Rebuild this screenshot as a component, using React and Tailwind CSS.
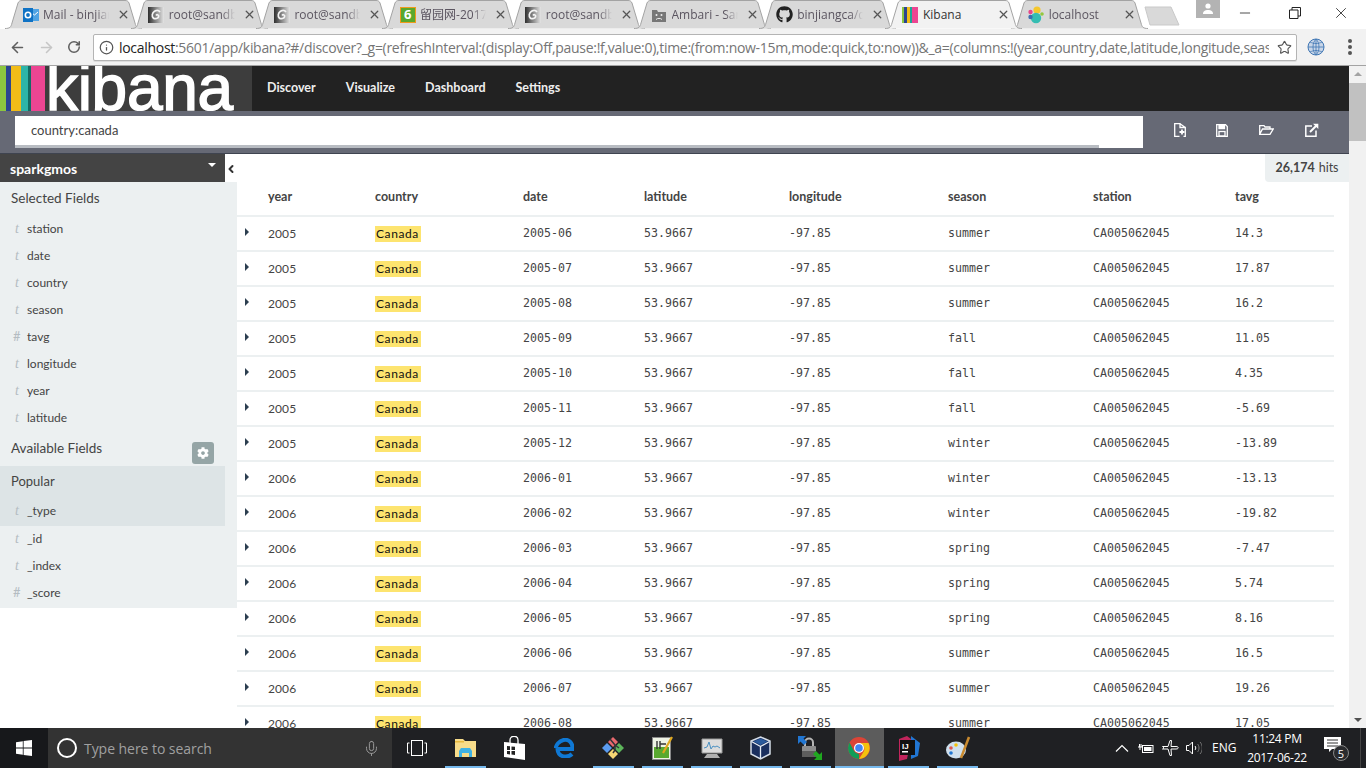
import React from "react";
import { FaGithub, FaCog } from "react-icons/fa";
import { ArrowLeft, ArrowRight, RotateCw, Star, Info, X, Minus, Mic, ChevronLeft } from "lucide-react";

const uiFont = "font-['Open_Sans','Noto_Sans_CJK_SC',sans-serif]";

const Swirl = () => (
  <svg width="16" height="16" viewBox="0 0 16 16">
    <defs>
      <linearGradient id="sw" x1="0" x2="1">
        <stop offset="0" stopColor="#2f2f2f" />
        <stop offset="1" stopColor="#e4e4e4" />
      </linearGradient>
    </defs>
    <rect width="16" height="16" fill="url(#sw)" />
    <path d="M8 8.500c1.200-1.500 3-.5 2.600 1.200S7 12.500 5.300 11 4 5.800 6.500 4.300 11 3.500 12 5" fill="none" stroke="#f4f4f4" strokeWidth="1.700" />
  </svg>
);

const OutlookIcon = () => (
  <svg width="16" height="16" viewBox="0 0 16 16">
    <rect x="6" y="2" width="10" height="12" fill="#4fa3e3" />
    <path d="M9 6l2.5 2L15 5" fill="none" stroke="#fff" />
    <rect y="1" width="10" height="14" fill="#0f72c4" />
    <circle cx="5" cy="8" r="2.7" fill="none" stroke="#fff" strokeWidth="1.6" />
  </svg>
);

const SixIcon = () => (
  <span className="flex h-4 w-4 items-center justify-center border border-[#f09a1a] bg-[#5aa82d] text-[13px] font-bold leading-none text-white">6</span>
);

const AmbariIcon = () => (
  <svg width="16" height="16" viewBox="0 0 16 16">
    <path d="M1 3h5l1 2h8v10H1z" fill="#777" />
    <circle cx="5.5" cy="8" r="1" fill="#eee" />
    <circle cx="10.5" cy="8" r="1" fill="#eee" />
    <path d="M5 12.5c1.5-1.5 4.5-1.5 6 0" stroke="#eee" fill="none" />
  </svg>
);

const KibanaIcon = () => (
  <svg width="16" height="16" viewBox="0 0 16 16">
    <rect width="2" height="16" fill="#8cc63f" />
    <rect x="2" width="3" height="16" fill="#2b4590" />
    <rect x="5" width="3" height="16" fill="#f1bc18" />
    <rect x="8" width="2" height="16" fill="#1ba898" />
    <rect x="10" width="6" height="16" fill="#ec4592" />
  </svg>
);

const ElasticIcon = () => (
  <svg width="16" height="18" viewBox="0 0 16 18">
    <circle cx="9" cy="4" r="3.6" fill="#f5c72c" />
    <circle cx="8" cy="12" r="5.2" fill="#35bdb2" />
    <circle cx="2.5" cy="6" r="2.2" fill="#e8488a" />
    <circle cx="2.5" cy="11" r="2.2" fill="#3d6db0" />
    <circle cx="14" cy="8" r="1.8" fill="#94c83d" />
  </svg>
);

const tabs = [
  { title: "Mail - binjiang", icon: <OutlookIcon /> },
  { title: "root@sandbox", icon: <Swirl /> },
  { title: "root@sandbox", icon: <Swirl /> },
  { title: "留园网-2017", icon: <SixIcon /> },
  { title: "root@sandbox", icon: <Swirl /> },
  { title: "Ambari - Sandbox", icon: <AmbariIcon /> },
  { title: "binjiangca/data", icon: <FaGithub size={17} color="#222" /> },
  { title: "Kibana", icon: <KibanaIcon />, active: true },
  { title: "localhost", icon: <ElasticIcon /> },
];

const Tab = ({ title, icon, active }) => (
  <div className={`relative mr-[-11.3px] flex h-[29px] w-[137px] shrink-0 items-center pl-[17px] pr-[12px] ${active ? "z-10" : ""}`}>
    <svg className="absolute inset-0" width="137" height="29" viewBox="0 0 137 29">
      <path
        d="M0 28.5C5 28.5 6 27 7 23L13 3C14 1 15 .5 17 .5H120C122 .5 123 1 124 3L130 23C131 27 132 28.5 137 28.5"
        fill={active ? "#f2f2f2" : "#d9d9d9"}
        stroke="#a3a3a3"
      />
    </svg>
    <span className="relative flex w-[17px] shrink-0 justify-center">{icon}</span>
    <span className={`relative ml-[4px] w-[66px] overflow-hidden whitespace-nowrap text-[12px] ${active ? "text-[#333]" : "text-[#5b5560] [mask-image:linear-gradient(to_right,black_80%,transparent)]"}`}>
      {title}
    </span>
    <X className="relative ml-auto text-[#555]" size={13} strokeWidth={2.4} />
  </div>
);

const TabStrip = () => (
  <div className={`flex h-[29px] items-start bg-white pl-[5px] ${uiFont}`}>
    {tabs.map((tab, i) => (
      <Tab key={i} {...tab} />
    ))}
    <svg className="ml-[8px] mt-[6px] shrink-0" width="36" height="20" viewBox="0 0 36 20">
      <path d="M1 1H27L35 19H6Z" fill="#d9d9d9" stroke="#c9c9c9" />
    </svg>
    <div className="ml-[16px] flex h-[18px] w-[24px] shrink-0 items-center justify-center bg-[#b3b3b3]">
      <svg width="12" height="12" viewBox="0 0 12 12">
        <circle cx="6" cy="3" r="2.6" fill="#fff" />
        <path d="M1 11c0-3 2-4 5-4s5 1 5 4z" fill="#fff" />
      </svg>
    </div>
    <div className="flex flex-1 items-center pt-[4px] text-[#222]">
      <Minus className="ml-[17px]" size={16} strokeWidth={1.2} />
      <svg className="ml-[36px]" width="12" height="12" viewBox="0 0 12 12" fill="none" stroke="#222">
        <path d="M3 3V.5h8.5V9H9M.5 3H9v8.5H.5z" />
      </svg>
      <X className="ml-[31px]" size={18} strokeWidth={1.1} />
    </div>
  </div>
);

const Toolbar = () => (
  <div className={`flex h-[37px] items-center border-b border-[#a3a3a3] bg-[#f2f2f2] ${uiFont}`}>
    <ArrowLeft className="ml-[9px] text-[#5f5f5f]" size={17} strokeWidth={2.2} />
    <ArrowRight className="ml-[12px] text-[#c6c6c6]" size={17} strokeWidth={2.2} />
    <RotateCw className="ml-[12px] text-[#5f5f5f]" size={14} strokeWidth={2.6} />
    <div className="ml-[12px] flex h-[27px] w-[1204px] items-center rounded-[2px] border border-[#b4b4b4] bg-white pl-[5px] pr-[4px] shadow-[0_1px_0_#ddd]">
      <Info className="shrink-0 text-[#555]" size={15} strokeWidth={2} />
      <span className="ml-[5px] flex-1 overflow-hidden whitespace-nowrap text-[14px] tracking-[-0.3px] text-[#757575]">
        <span className="text-[#222]">localhost</span>:5601/app/kibana?#/discover?_g=(refreshInterval:(display:Off,pause:!f,value:0),time:(from:now-15m,mode:quick,to:now))&amp;_a=(columns:!(year,country,date,latitude,longitude,season,station,tavg)
      </span>
      <Star className="ml-[8px] shrink-0 text-[#555]" size={15} strokeWidth={1.8} />
    </div>
    <svg className="ml-[10px]" width="18" height="18" viewBox="0 0 18 18" fill="none">
      <circle cx="9" cy="9" r="8" fill="#c9d6e8" stroke="#3f76b4" />
      <path d="M1 9h16M9 1v16M3 4c4 2 8 2 12 0M3 14c4-2 8-2 12 0M9 1C5 5 5 13 9 17M9 1c4 4 4 12 0 16" stroke="#3f76b4" strokeWidth=".8" />
    </svg>
    <div className="ml-[23px] flex flex-col gap-[2px]">
      <span className="h-[4px] w-[4px] rounded-full bg-[#555]" />
      <span className="h-[4px] w-[4px] rounded-full bg-[#555]" />
      <span className="h-[4px] w-[4px] rounded-full bg-[#555]" />
    </div>
  </div>
);

const KibanaNav = () => (
  <div className="flex h-[45px] bg-[#222]">
    <div className="flex h-[45px] w-[252px] shrink-0 overflow-hidden bg-[#3d3d3d]">
      <span className="w-[6px] bg-[#8cc63f]" />
      <span className="w-[5px] bg-[#2b4590]" />
      <span className="w-[10px] bg-[#f1bc18]" />
      <span className="w-[7px] bg-[#2db5a8]" />
      <span className="w-[3px] bg-[#146c66]" />
      <span className="w-[14px] bg-[#ec4592]" />
      <span className="ml-[1px] font-['Liberation_Sans',sans-serif] text-[64px] leading-[45px] tracking-[-0.3px] text-white [-webkit-text-stroke:1.5px_white]">kibana</span>
    </div>
    <nav className="flex items-center gap-[30px] pl-[15px] font-['Lato',sans-serif] text-[12.5px] font-bold text-[#eee]">
      <span>Discover</span>
      <span>Visualize</span>
      <span>Dashboard</span>
      <span>Settings</span>
    </nav>
  </div>
);

const SearchBar = () => (
  <div className="flex h-[43px] items-start border-b border-[#3f4450] bg-[#666975] pl-[15px] pt-[5px] font-['Lato',sans-serif]">
    <div className="relative h-[32px] w-[1128px] bg-white pl-[16px] text-[13px] leading-[29px] text-[#444]">
      country:canada
      <span className="absolute bottom-0 left-0 h-[3px] w-[1084px] bg-[#b8bcc2]" />
    </div>
    <div className="ml-[31px] flex items-center gap-[30px] pt-[7px]">
      <svg width="12" height="14" viewBox="0 0 12 14" fill="none" stroke="#fff" strokeWidth="1.300">
        <path d="M5.500 13.300H.7V.7H6V4.500H11.300V13.300H9.500M6 .7L11.300 4.500" />
        <path d="M8 6.500V11.500M5.500 9H10.500" strokeWidth="1.800" />
      </svg>
      <svg width="12" height="13" viewBox="0 0 12 13" fill="none" stroke="#fff" strokeWidth="1.300">
        <path d="M.7.7H9.500L11.300 2.500V12.300H.7Z" />
        <path d="M3 1V4.500H8.500V1" fill="#fff" />
        <rect x="3" y="7.500" width="6" height="4.500" />
      </svg>
      <svg className="ml-[1px]" width="15" height="10" viewBox="0 0 15 10" fill="none" stroke="#fff" strokeWidth="1.300">
        <path d="M.7 9.300V.7H5L6 2H11V4M.7 9.300H11L14.300 4H3.500Z" />
      </svg>
      <svg className="ml-[1px]" width="14" height="14" viewBox="0 0 14 14" fill="none" stroke="#fff" strokeWidth="1.500">
        <path d="M7 3H.8V13.200H11V7.500" />
        <path d="M5 9L12 2" strokeWidth="2" />
        <path d="M8 .7H13.300V6Z" fill="#fff" strokeWidth="0" />
      </svg>
    </div>
  </div>
);

const selectedFields = [
  ["t", "station"],
  ["t", "date"],
  ["t", "country"],
  ["t", "season"],
  ["#", "tavg"],
  ["t", "longitude"],
  ["t", "year"],
  ["t", "latitude"],
];

const Field = ({ type, name, className = "" }) => (
  <div className={`flex h-[27px] items-center text-[12px] text-[#444] ${className}`}>
    <span className={`w-[27px] shrink-0 text-[#b4bcc2] ${type === "t" ? "pl-[15px] font-['Liberation_Serif',serif] italic text-[14px]" : "pl-[13px] text-[13px]"}`}>{type}</span>
    {name}
  </div>
);

const Sidebar = () => (
  <aside className="flex w-[237px] shrink-0 flex-col self-start">
    <div className="flex h-[28px]">
      <div className="relative flex w-[225px] items-center bg-[#444] pl-[10px] text-[14px] font-bold text-white">
        sparkgmos
        <span className="absolute right-[9px] top-[9px] h-0 w-0 border-x-[4px] border-t-[4px] border-x-transparent border-t-white" />
      </div>
      <div className="flex flex-1 items-center justify-center pt-[2px] text-[#333]">
        <ChevronLeft size={12} strokeWidth={4} />
      </div>
    </div>
    <div className="bg-[#ecf0f1]">
      <div className="flex h-[33px] items-center pl-[11px] text-[13.5px] text-[#444]">Selected Fields</div>
      {selectedFields.map(([type, name]) => (
        <Field key={name} type={type} name={name} />
      ))}
      <div className="flex h-[35px] items-center justify-between pl-[11px] pr-[23px] text-[13.5px] text-[#444]">
        Available Fields
        <span className="mt-[9px] flex h-[22px] w-[22px] items-center justify-center rounded-[3px] bg-[#95a5a6] text-white">
          <FaCog size={12} />
        </span>
      </div>
      <div className="mr-[12px] h-[60px] bg-[#dde4e6]">
        <div className="flex h-[31px] items-center pl-[11px] text-[13px] text-[#444]">Popular</div>
        <Field type="t" name="_type" />
      </div>
      <Field className="-mt-[1px]" type="t" name="_id" />
      <Field type="t" name="_index" />
      <Field type="#" name="_score" />
      <div className="h-[2px]" />
    </div>
  </aside>
);

const columns = ["year", "country", "date", "latitude", "longitude", "season", "station", "tavg"];

const rows = [
  ["2005", "2005-06", "summer", "14.3"],
  ["2005", "2005-07", "summer", "17.87"],
  ["2005", "2005-08", "summer", "16.2"],
  ["2005", "2005-09", "fall", "11.05"],
  ["2005", "2005-10", "fall", "4.35"],
  ["2005", "2005-11", "fall", "-5.69"],
  ["2005", "2005-12", "winter", "-13.89"],
  ["2006", "2006-01", "winter", "-13.13"],
  ["2006", "2006-02", "winter", "-19.82"],
  ["2006", "2006-03", "spring", "-7.47"],
  ["2006", "2006-04", "spring", "5.74"],
  ["2006", "2006-05", "spring", "8.16"],
  ["2006", "2006-06", "summer", "16.5"],
  ["2006", "2006-07", "summer", "19.26"],
  ["2006", "2006-08", "summer", "17.05"],
];

const gridCols = "grid grid-cols-[31px_107px_148px_121px_145px_159px_145px_142px_99px]";

const ResultsTable = () => (
  <main className="relative flex-1 overflow-hidden pr-[15px]">
    <div className="-mr-[15px] ml-auto flex h-[28px] w-[84px] items-center justify-center rounded-bl-[4px] bg-[#ecf0f1] text-[12.5px] text-[#444]">
      <b className="mr-[4px]">26,174</b> hits
    </div>
    <div className={`${gridCols} h-[35px] items-center border-b-2 border-[#ecf0f1] pb-[2px] text-[12.5px] font-bold text-[#444]`}>
      <span />
      {columns.map((c) => (
        <span key={c}>{c}</span>
      ))}
    </div>
    {rows.map(([year, date, season, tavg], i) => (
      <div key={i} className={`${gridCols} h-[35px] items-center border-b-2 border-[#ecf0f1] font-['DejaVu_Sans_Mono',monospace] text-[11.6px] text-[#444]`}>
        <span className="mb-[4px] ml-[8px] h-0 w-0 border-y-[4px] border-l-[4px] border-y-transparent border-l-[#2c3e50]" />
        <span className="font-['Lato',sans-serif] text-[12px] tracking-[0.1px]">{year}</span>
        <span className="flex">
          <mark className="h-[16px] w-[46px] bg-[#fde46f] pl-[1px] font-['Lato',sans-serif] text-[12px] leading-[16px] tracking-[0.6px] text-[#111]">Canada</mark>
        </span>
        <span>{date}</span>
        <span>53.9667</span>
        <span>-97.85</span>
        <span>{season}</span>
        <span>CA005062045</span>
        <span>{tavg}</span>
      </div>
    ))}
  </main>
);

const Scrollbar = () => (
  <div className="flex w-[17px] shrink-0 flex-col items-center bg-[#f1f1f1]">
    <span className="mt-[6px] h-0 w-0 border-x-[4px] border-b-[4px] border-x-transparent border-b-[#a3a3a3]" />
    <span className="mt-[7px] h-[58px] w-full bg-[#c1c1c1]" />
    <span className="mb-[6px] mt-auto h-0 w-0 border-x-[4px] border-t-[4px] border-x-transparent border-t-[#505050]" />
  </div>
);

const TaskIcon = ({ children, running, active }) => (
  <div className={`relative flex h-[40px] w-[49.2px] shrink-0 items-center justify-center ${active ? "bg-[#5c5c5c]" : ""}`}>
    {children}
    {running && <span className={`absolute bottom-0 h-[2px] bg-[#76b9ed] ${active ? "inset-x-0" : "inset-x-[4px]"}`} />}
  </div>
);

const Taskbar = () => (
  <div className={`flex h-[40px] items-center bg-[#1f2023] text-white ${uiFont}`}>
    <div className="flex h-[40px] w-[48px] shrink-0 items-center justify-center bg-[#17181b]">
      <svg width="16" height="16" viewBox="0 0 16 16" fill="#fff">
        <path d="M0 2.2L6.8 1.2V7.6H0zM7.6 1.1L16 0V7.6H7.6zM0 8.4H6.8V14.8L0 13.8zM7.6 8.4H16V16L7.6 14.9z" />
      </svg>
    </div>
    <div className="flex h-[40px] w-[344px] shrink-0 items-center bg-[#333] pl-[9px] text-[#a0a0a0]">
      <span className="h-[20px] w-[20px] rounded-full border-[2px] border-white" />
      <span className="ml-[7px] text-[14px] tracking-[-0.05px]">Type here to search</span>
      <Mic className="ml-auto mr-[12px] text-[#999]" size={17} strokeWidth={1.4} />
    </div>
    <TaskIcon>
      <svg width="20" height="16" viewBox="0 0 20 16" fill="none" stroke="#fff">
        <rect x="4.5" y=".5" width="11" height="15" />
        <path d="M2.5 3H.5v10h2M17.5 3h2v10h-2" />
      </svg>
    </TaskIcon>
    <TaskIcon running>
      <svg width="21" height="18" viewBox="0 0 21 18">
        <path d="M0 0h8l2 2h11v16H0z" fill="#f7dc8a" />
        <rect y="2" width="9" height="1.500" fill="#e8b93f" />
        <path d="M4 18v-6l2-3h9l2 3v6h-3v-4H7v4z" fill="#3fb2e4" />
      </svg>
    </TaskIcon>
    <TaskIcon>
      <svg width="21" height="24" viewBox="0 0 21 24">
        <path d="M0 6L21 8V24L0 21z" fill="#fff" />
        <path d="M6 7V4c0-5 8-5 8 0v4" stroke="#fff" fill="none" strokeWidth="1.300" />
        <path d="M3 10l3 .3v3.700H3zM7.500 10.500l3.500.3v3.200H7.500zM3 15h3v3.500l-3-.4zM7.500 15H11v4l-3.500-.4z" fill="#222" />
      </svg>
    </TaskIcon>
    <TaskIcon>
      <svg width="20" height="20" viewBox="0 0 20 20" fill="none">
        <path d="M18 16C14 20 4 20 3.500 11H18.500C19 4 14 1 9.500 2 5 3 2 7 1.800 10" stroke="#0f78d4" strokeWidth="4" />
      </svg>
    </TaskIcon>
    <TaskIcon running>
      <svg width="24" height="24" viewBox="0 0 24 24">
        <path d="M12 1l5 5-5 5-5-5z" fill="#e9696e" />
        <path d="M6 7l5 5-5 5-5-5z" fill="#5b9bf0" />
        <path d="M18 7l5 5-5 5-5-5z" fill="#5db55b" />
        <path d="M12 13l5 5-5 5-5-5z" fill="#f7d774" />
        <path d="M9 3l5 6v5M14 9l4 3M14 14l-2 3" stroke="#33353a" strokeWidth="1.500" fill="none" />
      </svg>
    </TaskIcon>
    <TaskIcon running>
      <svg width="21" height="24" viewBox="0 0 21 24">
        <rect x=".5" y="1.500" width="18" height="22" fill="#eef3e4" stroke="#888" />
        <rect x="2" y="11" width="15" height="11" fill="#59a92f" />
        <path d="M5 13V5M8 13V5M8 8h6" stroke="#333" strokeWidth="1.400" />
        <path d="M20 1L11 17" stroke="#e0a81f" strokeWidth="2.200" />
      </svg>
    </TaskIcon>
    <TaskIcon running>
      <svg width="24" height="24" viewBox="0 0 24 24">
        <path d="M2 3h20v14H2z" fill="#dcdcdc" stroke="#999" />
        <path d="M4 12l3-1 2-5 2 7 2-3 2 1 2-1 3 2" fill="none" stroke="#4a90c2" />
        <path d="M7 18h10l3 4H4z" fill="#b0b0b0" />
      </svg>
    </TaskIcon>
    <TaskIcon running>
      <svg width="21" height="24" viewBox="0 0 21 24">
        <path d="M10.500 1l9.500 4v13l-9.500 5L1 18V5z" fill="#1a2f5e" stroke="#d5dde8" strokeWidth="1.500" />
        <path d="M10.500 10.500L1.500 5.500M10.500 10.500l9-5M10.500 10.500V22" stroke="#e6edf5" strokeWidth="1.300" />
        <path d="M10.500 2.500L17.500 5.500 10.500 9 3.500 5.500z" fill="#2a5a9c" />
      </svg>
    </TaskIcon>
    <TaskIcon running>
      <svg width="24" height="24" viewBox="0 0 24 24">
        <rect x="4" y="10" width="14" height="11" rx="1" fill="#8d8d8d" />
        <rect x="4" y="15" width="14" height="6" fill="#5d5d5d" />
        <path d="M7 10V6.500a4 4 0 018 0V10" fill="none" stroke="#b5b5b5" strokeWidth="2" />
        <path d="M0 0h8L5.500 2.500 9 6 6 9 2.500 5.500 0 8z" fill="#2176d2" />
        <path d="M24 24h-8l2.500-2.500L15 18l3-3 3.500 3.500L24 16z" fill="#1fa81f" />
      </svg>
    </TaskIcon>
    <TaskIcon running active>
      <svg width="22" height="22" viewBox="0 0 22 22">
        <circle cx="11" cy="11" r="11" fill="#db4437" />
        <path d="M11 22A11 11 0 0 1 1.500 5.500L6 14a6 6 0 0 0 5 3z" fill="#0f9d58" />
        <path d="M11 6h9.500A11 11 0 0 1 11 22l5-8a6 6 0 0 0-5-8z" fill="#f4c20d" />
        <circle cx="11" cy="11" r="5" fill="#fff" />
        <circle cx="11" cy="11" r="3.800" fill="#4285f4" />
      </svg>
    </TaskIcon>
    <TaskIcon running>
      <svg width="24" height="25" viewBox="0 0 24 25">
        <path d="M3 3l8-3 4 3-4 20-8 2z" fill="#c2255c" />
        <path d="M15 0l9 7-2 13-7 3z" fill="#2176d2" />
        <rect x="4" y="4" width="15" height="15" fill="#111" />
        <text x="6" y="12.500" fill="#fff" fontSize="8" fontWeight="700" fontFamily="Liberation Sans">IJ</text>
        <rect x="6" y="15" width="6" height="1.500" fill="#fff" />
      </svg>
    </TaskIcon>
    <TaskIcon running>
      <svg width="26" height="26" viewBox="0 0 26 26">
        <ellipse cx="11" cy="15" rx="10" ry="8.500" fill="#cfe0ee" />
        <circle cx="6" cy="13" r="1.800" fill="#e0574f" />
        <circle cx="11" cy="10" r="1.800" fill="#f4c20d" />
        <circle cx="6" cy="18" r="1.800" fill="#2176d2" />
        <path d="M24 2l-8 21" stroke="#c98a2f" strokeWidth="2.500" />
      </svg>
    </TaskIcon>
    <div className="ml-auto flex h-[40px] items-center border-r border-[#444] mr-[5px]">
      <svg width="14" height="8" viewBox="0 0 14 8" fill="none" stroke="#fff" strokeWidth="1.200">
        <path d="M1 7.500L7 1.500 13 7.500" />
      </svg>
      <svg className="ml-[9px]" width="16" height="11" viewBox="0 0 16 11" fill="none" stroke="#fff">
        <rect x="4.500" y="2.500" width="10.500" height="7" />
        <rect x="6" y="4" width="7.500" height="4" fill="#fff" stroke="none" />
        <path d="M0 4h4M1.500 1v3M3 1v3M2 4v3" />
      </svg>
      <svg className="ml-[8px]" width="17" height="16" viewBox="0 0 17 16" fill="none" stroke="#fff">
        <path d="M.5 6.500H6L8 .5H9.500L9 6.500H14C17 6.500 17 9 14 9H9L9.500 15.500H8L6 9H.5L2 7.800z" />
      </svg>
      <svg className="ml-[7px]" width="16" height="16" viewBox="0 0 16 16" fill="none" stroke="#fff">
        <path d="M.5 5.500H3L6.500 2V14L3 10.500H.5z" />
        <path d="M9 6c1 1 1 3 0 4" />
        <path d="M11.500 4c2 2 2 6 0 8M14 2c3 3 3 9 0 12" stroke="#777" />
      </svg>
      <span className="ml-[10px] w-[24px] text-[12px]">ENG</span>
      <div className="ml-[8px] flex w-[66px] flex-col items-center text-[12px] leading-[19px] tracking-[-0.3px]">
        <span>11:24 PM</span>
        <span>2017-06-22</span>
      </div>
      <div className="relative ml-[14px] mr-[12px] h-[24px] w-[24px]">
        <svg className="mt-[1px]" width="17" height="15" viewBox="0 0 17 15">
          <path d="M0 0h17v12H8l-3 3v-3H0z" fill="#fff" />
          <path d="M3 3h11M3 6h11M3 9h11" stroke="#333" />
        </svg>
        <span className="absolute -bottom-[1px] right-[-1px] flex h-[16px] w-[16px] items-center justify-center rounded-full border border-[#888] bg-[#2a2b2e] text-[11px] leading-none">5</span>
      </div>
    </div>
  </div>
);

export default function App() {
  return (
    <div className="flex h-[768px] w-[1366px] flex-col overflow-hidden bg-white font-['Lato',sans-serif]">
      <TabStrip />
      <Toolbar />
      <div className="flex min-h-0 flex-1">
        <div className="flex min-w-0 flex-1 flex-col">
          <KibanaNav />
          <SearchBar />
          <div className="flex min-h-0 flex-1">
            <Sidebar />
            <ResultsTable />
          </div>
        </div>
        <Scrollbar />
      </div>
      <Taskbar />
    </div>
  );
}
